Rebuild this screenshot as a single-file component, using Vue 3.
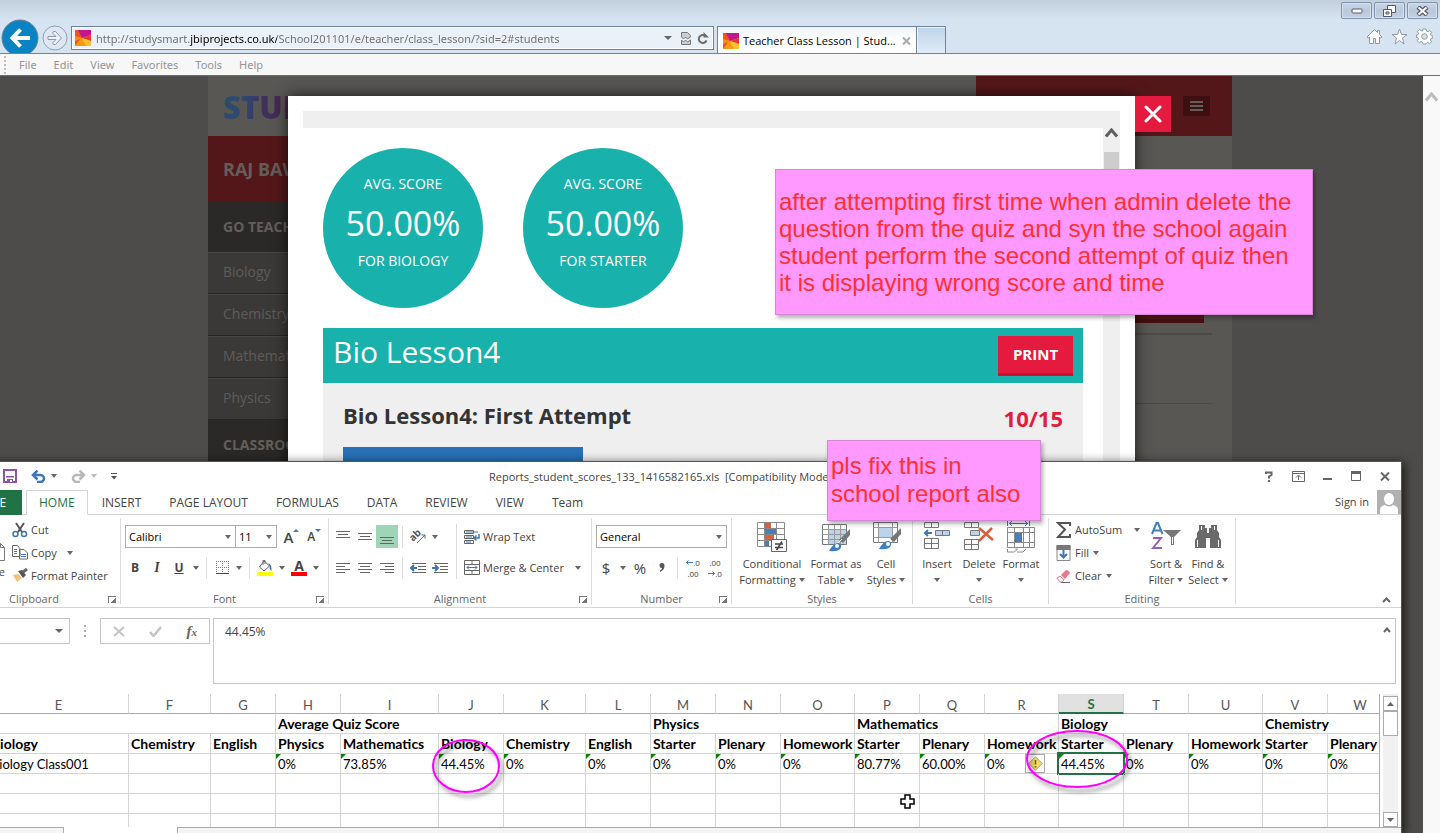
<script setup>
import { ref } from 'vue'

const url = ref('http://studysmart.jbiprojects.co.uk/School201101/e/teacher/class_lesson/?sid=2#students')
const formula = ref('44.45%')
const cellRef = ref('')
const fontName = ref('Calibri')
const fontSize = ref('11')
const numberFormat = ref('General')

const menus = ['File', 'Edit', 'View', 'Favorites', 'Tools', 'Help']
const subjects = ['Biology', 'Chemistry', 'Mathematics', 'Physics']
const scores = [
  { value: '50.00%', label: 'FOR BIOLOGY' },
  { value: '50.00%', label: 'FOR STARTER' }
]
const tabs = ['HOME', 'INSERT', 'PAGE LAYOUT', 'FORMULAS', 'DATA', 'REVIEW', 'VIEW', 'Team']

const columns = [
  ['E', 140], ['F', 82], ['G', 65], ['H', 65], ['I', 98], ['J', 65], ['K', 82], ['L', 65],
  ['M', 65], ['N', 65], ['O', 74], ['P', 65], ['Q', 65], ['R', 74], ['S', 65], ['T', 65],
  ['U', 74], ['V', 65], ['W', 65]
]
const groups = [
  ['', 3], ['Average Quiz Score', 5], ['Physics', 3], ['Mathematics', 3], ['Biology', 3], ['Chemistry', 2]
]
const heads = [
  'Biology', 'Chemistry', 'English', 'Physics', 'Mathematics', 'Biology', 'Chemistry', 'English',
  'Starter', 'Plenary', 'Homework', 'Starter', 'Plenary', 'Homework', 'Starter', 'Plenary',
  'Homework', 'Starter', 'Plenary'
]
const values = [
  'Biology Class001', '', '', '0%', '73.85%', '44.45%', '0%', '0%', '0%', '0%', '0%',
  '80.77%', '60.00%', '0%', '44.45%', '0%', '0%', '0%', '0%'
]
</script>

<template>
  <div class="desktop">
    <section class="browser">
      <header class="chrome">
        <div class="win-buttons">
          <button aria-label="Minimize"><svg width="12" height="6"><rect x="1" y="1" width="10" height="4" rx="1" fill="#fff" stroke="#555a6b" /></svg></button>
          <button aria-label="Restore"><svg width="13" height="12"><path d="M4.500.5h8v7h-8z" fill="#fff" stroke="#555a6b" /><path d="M.5 4.500h8v7h-8z" fill="#fff" stroke="#555a6b" /><path d="M3 7h3v2h-3z" fill="#c5d1e0" stroke="#555a6b" /></svg></button>
          <button aria-label="Close"><svg width="13" height="10"><path d="M2 1l9 8M11 1l-9 8" stroke="#555a6b" stroke-width="4.500" /><path d="M2.500 1.500l8 7M10.500 1.500l-8 7" stroke="#fff" stroke-width="2" /></svg></button>
        </div>
        <div class="nav">
          <button class="back" aria-label="Back">
            <svg width="38" height="38" viewBox="0 0 38 38"><circle cx="19" cy="19" r="18" fill="#0a83c4" stroke="#6f8299" /><path d="M29 19H12M19.500 10.500l-8 8.500 8 8.500" fill="none" stroke="#fff" stroke-width="4" /></svg>
          </button>
          <button class="forward" aria-label="Forward">
            <svg width="26" height="26" viewBox="0 0 26 26"><circle cx="13" cy="13" r="12" fill="#dfe8f2" stroke="#8fa0b3" /><path d="M6 11.500h8L10.500 8l1-1.500h2l6 6.500-6 6.500h-2l-1-1.500 3.500-3.500H6z" fill="#eef3f9" stroke="#8997a8" /></svg>
          </button>
          <div class="address">
            <svg class="favicon" width="16" height="16" viewBox="0 0 16 16"><path d="M0 0h16v16H0z" fill="#f8b418" /><path d="M0 0h5l3 8-8 8z" fill="#f4511e" /><path d="M3 0h13v5L7 8z" fill="#c2188c" /><path d="M0 6l8 2-8 3z" fill="#ff8a1c" /><path d="M7 8l9-3v6z" fill="#e53935" /><path d="M7 8l9 3v5h-4z" fill="#fbc02d" /><path d="M6 8l5 8H0z" fill="#f59a16" /></svg>
            <input v-model="url" aria-label="Address" spellcheck="false" />
            <span class="caret"></span>
            <button aria-label="Compatibility view"><svg width="10" height="13" viewBox="0 0 10 13"><path d="M.5 5V.5h6l3 3V5l-3 2-2-2-2 2zM.5 8l2 2 2-2 2 2 3-2v4.500h-9z" fill="#c9cdd2" stroke="#777" /></svg></button>
            <button aria-label="Refresh"><svg width="12" height="13" viewBox="0 0 12 13"><path d="M8.500 4A4 4 0 1 0 9.500 8.500" fill="none" stroke="#6d6d6d" stroke-width="2" /><path d="M6.500 0v5.500H12z" fill="#6d6d6d" /></svg></button>
          </div>
          <div class="tab">
            <svg class="favicon" width="16" height="16" viewBox="0 0 16 16"><path d="M0 0h16v16H0z" fill="#f8b418" /><path d="M0 0h5l3 8-8 8z" fill="#f4511e" /><path d="M3 0h13v5L7 8z" fill="#c2188c" /><path d="M0 6l8 2-8 3z" fill="#ff8a1c" /><path d="M7 8l9-3v6z" fill="#e53935" /><path d="M7 8l9 3v5h-4z" fill="#fbc02d" /><path d="M6 8l5 8H0z" fill="#f59a16" /></svg>
            <span>Teacher Class Lesson | Stud...</span>
            <button aria-label="Close tab"><svg width="9" height="8"><path d="M1 .5l7 7M8 .5l-7 7" stroke="#aaa" stroke-width="2" /></svg></button>
          </div>
          <button class="new-tab" aria-label="New tab"></button>
          <div class="tools">
            <button aria-label="Home"><svg width="17" height="17" viewBox="0 0 17 17"><path d="M8.500 1.500L1 9l1.500 1L3.500 9v6.500h4v-5h2v5h4V9l1 1L16 9l-2.500-2.500v-4h-2v2z" fill="#fff" stroke="#9199a3" /></svg></button>
            <button aria-label="Favorites"><svg width="17" height="17" viewBox="0 0 17 17"><path d="M8.500 1l2 5.500H16l-4.500 3.500 1.500 6-4.500-3.500L4 16l1.500-6L1 6.500h5.500z" fill="#fff" stroke="#9199a3" /></svg></button>
            <button aria-label="Settings"><svg width="17" height="17" viewBox="0 0 17 17"><path d="M7 1h3l.4 2 1.600.700 1.700-1.200 2 2-1.200 1.700.6 1.500L17 8v2l-2 .5-.6 1.500 1.200 1.700-2 2-1.700-1.200-1.600.7L10 16H7l-.4-1.800-1.600-.7-1.700 1.200-2-2L2.500 11 2 9.700l-1.500-.2V7L2 6.700l.6-1.500-1.200-1.700 2-2 1.700 1.200L6.600 3z" fill="#fff" stroke="#9199a3" /><circle cx="8.500" cy="8.500" r="2.800" fill="#d6e4f1" stroke="#9199a3" /></svg></button>
          </div>
        </div>
      </header>
      <nav class="menubar">
        <span class="grip"></span>
        <button v-for="m in menus" :key="m">{{ m }}</button>
      </nav>

      <main class="page">
        <div class="site">
          <header class="site-head">
            <span class="logo">STUDYSMART</span>
            <div class="site-red">
              <button aria-label="Menu"><i></i><i></i><i></i></button>
            </div>
          </header>
          <div class="site-body">
            <aside>
              <div class="user">RAJ BAWA</div>
              <h4>GO TEACHING</h4>
              <a v-for="s in subjects" :key="s" href="#">{{ s }}</a>
              <h4>CLASSROOM</h4>
            </aside>
            <div class="site-main">
              <div class="red-bar"></div>
              <hr class="thick" />
              <hr />
            </div>
          </div>
        </div>

        <div class="modal">
          <button class="close" aria-label="Close"><svg width="18" height="18"><path d="M2 2l14 14M16 2L2 16" stroke="#fff" stroke-width="3" stroke-linecap="round" /></svg></button>
          <div class="frame">
            <div class="frame-content">
              <div class="scores">
                <div v-for="s in scores" :key="s.label" class="score">
                  <span>AVG. SCORE</span>
                  <strong>{{ s.value }}</strong>
                  <span>{{ s.label }}</span>
                </div>
              </div>
              <div class="lesson-head">
                <h2>Bio Lesson4</h2>
                <button>PRINT</button>
              </div>
              <div class="lesson-body">
                <div class="attempt">
                  <h3>Bio Lesson4: First Attempt</h3>
                  <b>10/15</b>
                </div>
                <div class="blue"></div>
              </div>
            </div>
            <div class="frame-scroll">
              <svg width="13" height="10" viewBox="0 0 13 10"><path d="M1 8.500L6.500 2 12 8.500" fill="none" stroke="#606060" stroke-width="3" /></svg>
              <div class="thumb"></div>
            </div>
          </div>
        </div>
        <div class="page-scroll">
          <svg width="13" height="10" viewBox="0 0 13 10"><path d="M1 8.500L6.500 2 12 8.500" fill="none" stroke="#bcbcbc" stroke-width="3" /></svg>
        </div>
      </main>
    </section>

    <section class="excel">
      <header class="xl-title">
        <div class="qat">
          <button aria-label="Save"><svg width="14" height="14"><path d="M1 1h12v12H1z" fill="#fff" stroke="#8a55a8" stroke-width="2" /><path d="M3 7h8v1.500H3zM4 10h6v4H4z" fill="#8a55a8" /><path d="M7 11h2v2H7z" fill="#fff" /></svg></button>
          <button class="undo" aria-label="Undo"><svg width="15" height="13"><path d="M2 5h7a4 3.500 0 0 1 0 7H6M6.500.5L2 5l4.500 4.500" fill="none" stroke="#3f76b5" stroke-width="2.500" /></svg></button>
          <span class="caret"></span>
          <button class="redo" aria-label="Redo"><svg width="15" height="13"><path d="M13 5H6a4 3.500 0 0 0 0 7h3M8.500.5L13 5 8.500 9.500" fill="none" stroke="#b8b8b8" stroke-width="2.500" /></svg></button>
          <span class="caret pale"></span>
          <button class="more" aria-label="Customize"><svg width="6" height="7"><path d="M0 .5h6" stroke="#555" /><path d="M0 3h6L3 6.500z" fill="#555" /></svg></button>
        </div>
        <h1>Reports_student_scores_133_1416582165.xls&nbsp; [Compatibility Mode]</h1>
        <div class="xl-win">
          <button aria-label="Help"><svg width="9" height="11"><path d="M1 3V1.500h5.500V4L4 5.500V7.500M4 9v2" fill="none" stroke="#666" stroke-width="2" /></svg></button>
          <button aria-label="Ribbon display options"><svg width="13" height="11"><path d="M.5.5h12v10H.5zM.5 2.500h12M6.500 9V5M4 6.500L6.500 4 9 6.500" fill="none" stroke="#666" /></svg></button>
          <button aria-label="Minimize"><svg width="9" height="11"><path d="M0 8h9" stroke="#666" stroke-width="2" /></svg></button>
          <button aria-label="Maximize"><svg width="10" height="10"><path d="M.5.5h9v9h-9z" fill="none" stroke="#666" /><path d="M0 0h10v3H0z" fill="#666" /></svg></button>
          <button aria-label="Close"><svg width="10" height="9"><path d="M1 .5l8 8M9 .5l-8 8" stroke="#666" stroke-width="2" /></svg></button>
        </div>
      </header>

      <nav class="xl-tabs">
        <button class="file">FILE</button>
        <button v-for="(t, i) in tabs" :key="t" :class="{ on: i === 0 }">{{ t }}</button>
        <a href="#">Sign in</a>
        <svg class="avatar" width="24" height="24"><path d="M0 0h24v24H0z" fill="#b1b1b1" /><ellipse cx="12" cy="9" rx="5" ry="6" fill="#fff" /><path d="M3 24v-4q0-4 5-5 4 3 8 0 5 1 5 5v4z" fill="#fff" /></svg>
      </nav>

      <div class="ribbon">
        <div class="group clip">
          <div class="body">
            <button class="paste"><svg width="12" height="18"><path d="M.5.5h7l4 4v13H.5zM7.500.5v4h4" fill="#fff" stroke="#777" /></svg><span>Paste</span></button>
            <div class="stack3">
              <button><svg width="16" height="16"><path d="M4 1l6 9M12 1L6 10" stroke="#555" stroke-width="2" /><circle cx="3.500" cy="12" r="2.500" fill="none" stroke="#3f76b5" stroke-width="1.500" /><circle cx="12" cy="12" r="2.500" fill="none" stroke="#3f76b5" stroke-width="1.500" /></svg>Cut</button>
              <button><svg width="16" height="15"><path d="M.5.5h5l2.500 3v8H.5zM7.500 4.500H12l3.500 3.500v6h-8z" fill="#fff" stroke="#666" /><path d="M2 4.500h3M2 6.500h3M2 8.500h3M9 9.500h5M9 11.500h5" stroke="#3f76b5" /></svg>Copy<span class="caret"></span></button>
              <button><svg width="16" height="15"><path d="M1 7l5-1 4 4-5 4z" fill="#f0c27b" /><path d="M6 3l4-1 4 5-3 3z" fill="#555" /><path d="M11 4l4-3" stroke="#666" stroke-width="3" /></svg>Format Painter</button>
            </div>
          </div>
          <footer>Clipboard<i class="launch"></i></footer>
        </div>

        <div class="group font">
          <div class="body rows2">
            <div class="row">
              <label class="sel w-font"><select v-model="fontName" aria-label="Font"><option>Calibri</option></select><span class="caret"></span></label>
              <label class="sel w-size"><select v-model="fontSize" aria-label="Font size"><option>11</option></select><span class="caret"></span></label>
              <button class="b22 big-a" aria-label="Increase font size">A<svg width="6" height="3"><path d="M0 3h6L3 0z" fill="#3f76b5" /></svg></button>
              <button class="b22 small-a" aria-label="Decrease font size">A<svg width="6" height="3"><path d="M0 0h6L3 3z" fill="#3f76b5" /></svg></button>
            </div>
            <div class="row">
              <button class="b22"><b>B</b></button>
              <button class="b22"><em>I</em></button>
              <button class="b22"><u>U</u></button>
              <span class="caret c12"></span>
              <i class="sep"></i>
              <button class="b22" aria-label="Borders"><svg width="13" height="13"><path d="M.5 0v12M12.500 0v12M6.500 0v12M0 .5h13M0 6.500h13" stroke="#777" stroke-dasharray="1 1" /><path d="M0 12.500h13" stroke="#444" /></svg></button>
              <span class="caret c12"></span>
              <i class="sep"></i>
              <button class="b22" aria-label="Fill color"><svg width="16" height="16"><path d="M7 1l5.500 5L7 11 2.500 7zM6 5V.5h2V4" fill="#fff" stroke="#666" /><path d="M11 3q4 1 3.500 8-2-1-2-5z" fill="#3f76b5" /><path d="M0 12h16v4H0z" fill="#ff0" /></svg></button>
              <span class="caret c12"></span>
              <button class="b22 fc" aria-label="Font color"><b>A</b></button>
              <span class="caret c12"></span>
            </div>
          </div>
          <footer>Font<i class="launch"></i></footer>
        </div>

        <div class="group align">
          <div class="body">
            <div class="rows2 flat">
              <div class="row">
                <button class="b22" aria-label="Top align"><svg width="14" height="14"><path d="M0 1.500h14M2 4.500h10M0 7.500h14" stroke="#666" /></svg></button>
                <button class="b22" aria-label="Middle align"><svg width="14" height="14"><path d="M0 3.500h14M2 6.500h10M0 9.500h14" stroke="#666" /></svg></button>
                <button class="b22 active" aria-label="Bottom align"><svg width="14" height="16"><path d="M0 8.500h14M2 11.500h10M0 14.500h14" stroke="#666" /></svg></button>
                <i class="sep"></i>
                <button class="b22" aria-label="Orientation"><svg class="orient" width="16" height="15"><text x="0" y="10" transform="rotate(-45 5 8)" font-size="10" font-family="Open Sans, sans-serif" font-weight="bold" fill="#555">ab</text><path d="M7 14l8-8M11.500 6H15v3.500" fill="none" stroke="#666" /></svg></button>
                <span class="caret c12"></span>
              </div>
              <div class="row">
                <button class="b22" aria-label="Align left"><svg width="14" height="12"><path d="M0 1.500h14M0 4.500h9M0 7.500h14M0 10.500h9" stroke="#666" /></svg></button>
                <button class="b22" aria-label="Center"><svg width="14" height="12"><path d="M0 1.500h14M2 4.500h10M0 7.500h14M2 10.500h10" stroke="#666" /></svg></button>
                <button class="b22" aria-label="Align right"><svg width="14" height="12"><path d="M0 1.500h14M5 4.500h9M0 7.500h14M5 10.500h9" stroke="#666" /></svg></button>
                <i class="sep"></i>
                <button class="b22" aria-label="Decrease indent"><svg width="16" height="12"><path d="M2 1.500h14M8 4.500h8M8 7.500h8M2 10.500h14" stroke="#666" /><path d="M1 6h6M4 3L1 6l3 3" fill="none" stroke="#3f76b5" stroke-width="2" /></svg></button>
                <button class="b22" aria-label="Increase indent"><svg width="16" height="12"><path d="M2 1.500h14M8 4.500h8M8 7.500h8M2 10.500h14" stroke="#666" /><path d="M0 6h6M3 3l3 3-3 3" fill="none" stroke="#3f76b5" stroke-width="2" /></svg></button>
              </div>
            </div>
            <i class="sep tall"></i>
            <div class="rows2 flat wide">
              <button class="lbl"><svg width="16" height="16"><path d="M.5 1.500h9v3h-9zM.5 6.500h9v3h-9zM.5 11.500h9v3h-9z" fill="none" stroke="#666" /><path d="M2 3h12M2 8h6M2 13h5" stroke="#3f76b5" /><path d="M15 5v4h-4M12.500 6.500L10 9l2.500 2.500" fill="none" stroke="#3f76b5" stroke-width="1.500" /></svg>Wrap Text</button>
              <button class="lbl"><svg width="16" height="15"><path d="M.5.5h15v14H.5zM.5 4.500h15M.5 10.500h15M8 .5v4M8 10.500v4" fill="none" stroke="#666" /><path d="M3 7.500h10M5 5.500l-2 2 2 2M11 5.500l2 2-2 2" fill="none" stroke="#3f76b5" /></svg>Merge &amp; Center<span class="caret"></span></button>
            </div>
          </div>
          <footer>Alignment<i class="launch"></i></footer>
        </div>

        <div class="group number">
          <div class="body rows2">
            <div class="row">
              <label class="sel w-num"><select v-model="numberFormat" aria-label="Number format"><option>General</option></select><span class="caret"></span></label>
            </div>
            <div class="row">
              <button class="b22 sym">$</button>
              <span class="caret c12"></span>
              <button class="b22 sym">%</button>
              <button class="b22 sym" aria-label="Comma style"><svg width="6" height="9"><path d="M3 0a2.500 2.500 0 0 1 2.500 2.500Q5.500 7 1 9V7.500q2-1 2-2.500A2.500 2.500 0 0 1 3 0z" fill="#555" /></svg></button>
              <i class="sep"></i>
              <button class="b22 dec"><span><svg width="7" height="5"><path d="M0 2.500h7M2.500.5l-2 2 2 2" stroke="#3f76b5" fill="none" /></svg>.0</span><span>.00</span></button>
              <button class="b22 dec"><span>.00</span><span><svg width="7" height="5"><path d="M0 2.500h7M4.500.5l2 2-2 2" stroke="#3f76b5" fill="none" /></svg>.0</span></button>
            </div>
          </div>
          <footer>Number<i class="launch"></i></footer>
        </div>

        <div class="group styles">
          <div class="body bigs">
            <button class="big w74"><svg width="32" height="32"><path d="M1.500 1.500h27v24h-27zM1.500 7.500h27M1.500 13.500h27M1.500 19.500h27M8.500 1.500v24M20.500 1.500v24" fill="#fff" stroke="#8a8a8a" /><path d="M9 2h6v5H9zM9 14h9v5H9z" fill="#d9603a" /><path d="M9 8h11v5H9zM9 20h4v5H9z" fill="#4a7ebb" /><path d="M15.500 18.500h15v12h-15z" fill="#fff" stroke="#666" /><path d="M19 23h8M19 26.500h8M26 20.500L20.500 29" stroke="#444" stroke-width="1.500" /></svg><span>Conditional<br />Formatting<i class="caret"></i></span></button>
            <button class="big w54"><svg width="32" height="32"><path d="M2.500 3.500h24v20h-24z" fill="#fff" stroke="#777" /><path d="M8 8h18v15H8z" fill="#bdd3e9" /><path d="M2.500 8.500h24M2.500 13.500h24M2.500 18.500h24M8.500 3.500v20M14.500 3.500v20M20.500 3.500v20" stroke="#999" /><path d="M30 8v6l-7 8-4-3z" fill="#777" /><path d="M22 18l-6 6" stroke="#fff" stroke-width="1" /><path d="M9 30q5-9 10-8 4 2 1 6-3 3-11 2z" fill="#3f7fbd" /><circle cx="17" cy="25" r="2" fill="#fff" /></svg><span>Format as<br />Table<i class="caret"></i></span></button>
            <button class="big w46"><svg width="32" height="32"><path d="M3.500 1.500h24v20h-24z" fill="#fff" stroke="#777" /><path d="M3.500 6.500h24M3.500 16.500h24M8.500 1.500v20M22.500 1.500v20" stroke="#999" /><path d="M9 7h13v9H9z" fill="#bdd3e9" /><path d="M31 7v6l-7 8-4-3z" fill="#777" /><path d="M9 28q5-9 10-8 4 2 1 6-3 3-11 2z" fill="#3f7fbd" /><circle cx="18" cy="23" r="2" fill="#fff" /></svg><span>Cell<br />Styles<i class="caret"></i></span></button>
          </div>
          <footer>Styles</footer>
        </div>

        <div class="group cells">
          <div class="body bigs">
            <button class="big w42"><svg width="28" height="32"><path d="M1.500 1.500h14v5h-14zM8.500 1.500v5M1.500 17.500h14v10h-14zM8.500 17.500v10M1.500 22.500h14" fill="none" stroke="#777" /><path d="M12.500 9.500h14v5h-14zM19.500 9.500v5" fill="#bdd3e9" stroke="#777" /><path d="M2 12h7M5 9l-3 3 3 3" fill="none" stroke="#3f76b5" stroke-width="2" /></svg><span>Insert<br /><i class="caret"></i></span></button>
            <button class="big w42"><svg width="32" height="32"><path d="M1.500 1.500h14v5h-14zM8.500 1.500v5M1.500 18.500h14v10h-14zM8.500 18.500v10M1.500 23.500h14" fill="none" stroke="#777" /><path d="M7.500 9.500h9v5h-9z" fill="#bdd3e9" stroke="#777" /><path d="M16 7l14 12M29 7L16 20" stroke="#d9603a" stroke-width="2.500" /></svg><span>Delete<br /><i class="caret"></i></span></button>
            <button class="big w42"><svg width="30" height="32"><path d="M1.500 6.500h27v20h-27zM1.500 11.500h27M1.500 21.500h27M8.500 6.500v20M17.500 6.500v20M23.500 6.500v20" fill="#fff" stroke="#888" /><path d="M9 12h7v9H9z" fill="#4a7ebb" /><path d="M1.500 0v5M23.500 0v5M3 2.500h19M6 0L3.500 2.500 6 5M19 0l2.500 2.500L19 5" fill="none" stroke="#3f76b5" /><path d="M1.500 28v3h7l3-3h-2M11 31h6l3-3" fill="none" stroke="#888" /></svg><span>Format<br /><i class="caret"></i></span></button>
          </div>
          <footer>Cells</footer>
        </div>

        <div class="group editing">
          <div class="body">
            <div class="stack3">
              <button><svg width="16" height="16"><path d="M14 4V1H2l7 6.500L2 15h12v-3" fill="none" stroke="#555" stroke-width="2" /></svg>AutoSum<span class="caret far"></span></button>
              <button><svg width="15" height="16"><path d="M1 .5h13v15H1z" fill="#fff" stroke="#888" /><path d="M.5 0h14v5H.5z" fill="#777" /><path d="M7.500 5v7M4 9l3.500 3.500L11 9" fill="none" stroke="#3f76b5" stroke-width="2" /></svg>Fill<span class="caret"></span></button>
              <button><svg width="15" height="14"><path d="M5 6l5-5q3 0 4 3l-5 6z" fill="#e8788e" /><path d="M1 9l3-2 4 4-2 2H4z" fill="#fff" stroke="#e8788e" /><path d="M5 13.500h9" stroke="#666" /></svg>Clear<span class="caret"></span></button>
            </div>
            <div class="bigs flat">
              <button class="big w42"><svg width="30" height="32"><path d="M1 13L5.500 2h1.500L11.500 13M3 9.500h6.500" fill="none" stroke="#3f7fbd" stroke-width="2" /><path d="M2 17h8L2 27h9" fill="none" stroke="#9560b5" stroke-width="2" /><path d="M12 9h18l-7 7v8h-3v-8z" fill="#777" /><path d="M21.500 16v7" stroke="#fff" /></svg><span>Sort &amp;<br />Filter<i class="caret"></i></span></button>
              <button class="big w42"><svg width="28" height="32"><path d="M5 4h6v3h2v5h2V7h2V4h6v5l2 3v4l2 3v8H16V17h-4v10H1v-8l2-3v-4l2-3z" fill="#6a6a6a" /><path d="M3.500 19v7M24.500 19v7M7.500 5v4M20.500 5v4" stroke="#fff" /></svg><span>Find &amp;<br />Select<i class="caret"></i></span></button>
            </div>
          </div>
          <footer>Editing</footer>
        </div>
        <button class="collapse" aria-label="Collapse the ribbon"><svg width="9" height="6"><path d="M1 5l3.500-3.500L8 5" fill="none" stroke="#666" stroke-width="2" /></svg></button>
      </div>

      <div class="formula-bar">
        <div class="name-box"><input v-model="cellRef" aria-label="Name box" /><span class="caret"></span></div>
        <span class="dots"><i></i><i></i><i></i></span>
        <div class="fx">
          <button aria-label="Cancel"><svg width="12" height="11"><path d="M1 1l10 9M11 1L1 10" stroke="#c4c4c4" stroke-width="2" /></svg></button>
          <button aria-label="Enter"><svg width="13" height="11"><path d="M1 6l3.500 4L12 1" fill="none" stroke="#c4c4c4" stroke-width="2.500" /></svg></button>
          <button class="fn"><em>f<small>x</small></em></button>
        </div>
        <div class="formula">
          <textarea v-model="formula" aria-label="Formula" spellcheck="false"></textarea>
          <svg width="8" height="6"><path d="M1 5l3-3.500L7 5" fill="none" stroke="#666" stroke-width="2" /></svg>
        </div>
      </div>

      <div class="sheet">
        <div class="grid">
          <table>
            <colgroup><col v-for="c in columns" :key="c[0]" :style="{ width: c[1] + 'px' }" /></colgroup>
            <thead>
              <tr><th v-for="c in columns" :key="c[0]" :class="{ cur: c[0] === 'S' }">{{ c[0] }}</th></tr>
            </thead>
            <tbody>
              <tr class="bold"><td v-for="g in groups" :key="g[0]" :colspan="g[1]">{{ g[0] }}</td></tr>
              <tr class="bold"><td v-for="(h, i) in heads" :key="i">{{ h }}</td></tr>
              <tr>
                <td v-for="(v, i) in values" :key="i" :class="{ flag: i > 2, picked: i === 14 }">{{ v }}<span v-if="i === 13" class="warn"><svg width="15" height="15"><path d="M7.500.8l6.700 6.700-6.700 6.700L.8 7.500z" fill="#f7dc5a" stroke="#999" /><path d="M7.500 4v4.500M7.500 10v1.500" stroke="#555" stroke-width="1.500" /></svg></span></td>
              </tr>
              <tr v-for="n in 3" :key="n"><td v-for="c in columns" :key="c[0]"></td></tr>
            </tbody>
          </table>
        </div>
        <div class="xl-scroll">
          <button aria-label="Scroll up"><svg width="7" height="4"><path d="M0 4h7L3.500 0z" fill="#666" /></svg></button>
          <div class="xl-thumb"></div>
          <button class="down" aria-label="Scroll down"><svg width="7" height="4"><path d="M0 0h7L3.500 4z" fill="#666" /></svg></button>
        </div>
      </div>
      <div class="sheet-tabs"><i class="l"></i><i class="m"></i><i class="r"></i></div>
    </section>

    <svg class="ring ring-j" width="78" height="64"><ellipse cx="35" cy="28" rx="33" ry="26" fill="none" stroke="#ff00ff" stroke-width="2" /></svg>
    <svg class="ring ring-s" width="114" height="68"><ellipse cx="52" cy="30" rx="50" ry="28" fill="none" stroke="#ff00ff" stroke-width="2" /></svg>
    <svg class="cursor" width="16" height="16"><path d="M5 1h5v4h4v5h-4v4H5v-4H1V5h4z" fill="#fff" stroke="#000" stroke-width="1.500" /></svg>

    <p class="note note-a">after attempting first time when admin delete the<br />question from the quiz and syn the school again<br />student perform the second attempt of quiz then<br />it is displaying wrong score and time</p>
    <p class="note note-b">pls fix this in<br />school report also</p>
  </div>
</template>

<style>
html, body { margin: 0; height: 100%; overflow: hidden; }
</style>

<style scoped>
* { box-sizing: border-box; }
button { border: 0; background: none; padding: 0; margin: 0; font: inherit; color: inherit; display: flex; align-items: center; justify-content: center; white-space: nowrap; }
input, textarea, select { font: inherit; border: 0; background: none; padding: 0; margin: 0; outline: 0; color: inherit; resize: none; appearance: none; min-width: 0; border-radius: 0; }
h1, h2, h3, h4, p { margin: 0; font-weight: normal; }
b { font-weight: bold; }
svg { flex: none; display: block; }
.desktop { position: relative; height: 100vh; overflow: hidden; font: 11px/16px "Open Sans", "Noto Sans", sans-serif; color: #444; }
.caret { flex: none; display: inline-block; width: 0; height: 0; border: 3px solid transparent; border-top: 4px solid #666; border-bottom: 0; }
.caret.pale { border-top-color: #bbb; }

.browser { display: flex; flex-direction: column; height: 100%; }
.chrome { height: 54px; flex: none; background: linear-gradient(#c2cfdd, #d6e4f1 20px); border-bottom: 1px solid #6f8299; display: flex; flex-direction: column; }
.win-buttons { display: flex; justify-content: flex-end; gap: 2px; padding: 2px 2px 0; height: 19px; }
.win-buttons button { width: 31px; height: 17px; border: 1px solid #8192ae; border-radius: 2px; background: linear-gradient(#c9d6e5, #b9c8da 50%, #c3d0e0); box-shadow: inset 0 0 0 1px #d5e0ec; }
.nav { flex: 1; display: flex; align-items: flex-start; overflow: hidden; }
.back { margin-left: 1px; width: 38px; height: 38px; }
.forward { margin: 6px 3px 0; width: 26px; }
.address { flex: 0 1 643px; margin-top: 7px; height: 24px; border: 1px solid #6f8299; background: #ebf1f9; display: flex; align-items: center; padding: 0 4px 0 3px; color: #6d6d6d; box-shadow: inset 0 0 0 1px #fff; }
.address input { flex: 1; height: 18px; margin-left: 5px; font-family: "Noto Sans", sans-serif; background: linear-gradient(90deg, #6d6d6d 94px, #000 94px 181px, #6d6d6d 181px); -webkit-background-clip: text; background-clip: text; color: transparent; }
.address .caret { border-width: 4px 4px 0; }
.address button { margin-left: 6px; }
.address .caret + button { margin-left: 9px; }
.tab { flex: 0 1 200px; margin: 7px 0 0 3px; height: 28px; border: 1px solid #6f8299; border-bottom: 0; background: linear-gradient(#eef4fa, #fff 12px); display: flex; align-items: center; padding: 0 5px; color: #000; }
.tab span { flex: 1; margin-left: 4px; white-space: nowrap; }
.new-tab { margin-top: 7px; width: 29px; height: 28px; border: 1px solid #6f8299; border-width: 1px 1px 0 0; background: linear-gradient(#bdd3ea, #e2ecf7); box-shadow: inset 1px 1px 0 #eef4fa; }
.tools { margin: 9px 7px 0 auto; display: flex; gap: 8px; }
.menubar { height: 22px; flex: none; background: #f7f7f7; border-bottom: 1px solid #6e6d6b; display: flex; align-items: center; gap: 17px; color: #959595; font-family: "Noto Sans", sans-serif; }
.grip { width: 2px; height: 18px; margin: 0 -4px 0 4px; background: repeating-linear-gradient(#bbb 0 2px, transparent 2px 4px); }

.page { position: relative; flex: 1; overflow: hidden; background: #4d4c4a; font-size: 14px; }
.site { width: 1024px; max-width: 100%; margin: 0 auto; min-height: 100%; background: #585754; color: #5b5957; display: flex; flex-direction: column; }
.site-head { height: 60px; display: flex; justify-content: space-between; }
.logo { padding: 9px 15px; font-size: 31px; line-height: 44px; font-weight: 800; background: linear-gradient(90deg, #2b4d68 15px, #2f4a70 34px, #3a3260 54px, #55204c 84px); -webkit-background-clip: text; background-clip: text; color: transparent; }
.site-red { width: 256px; background: #541719; display: flex; justify-content: flex-end; align-items: flex-start; padding: 20px 22px; }
.site-red button { width: 27px; height: 20px; background: #3f0e11; flex-direction: column; gap: 2px; }
.site-red i { width: 13px; height: 2px; background: #635e5b; }
.site-body { flex: 1; display: flex; }
aside { width: 256px; background: #2a2927; }
.user { height: 66px; background: #541719; padding: 0 15px; line-height: 66px; font-size: 18px; font-weight: bold; color: #635e5b; }
aside h4 { height: 50px; line-height: 50px; padding: 0 15px; font-size: 14px; font-weight: bold; color: #635e5b; }
aside a { display: block; height: 42px; line-height: 38px; padding: 0 15px; background: #3a3937; border-bottom: 1px solid #262523; border-top: 1px solid #484745; color: #5e5c5a; text-decoration: none; }
.site-main { flex: 1; padding: 0 20px 0 0; }
.red-bar { margin: 140px 8px 10px 0; height: 47px; background: #541719; border-bottom: 4px solid #470f14; }
hr { border: 0; height: 1px; background: #4c4b49; margin: 0 0 69px; }
hr.thick { height: 2px; margin-bottom: 68px; }
.page-scroll { position: absolute; top: 0; right: 0; bottom: 0; width: 17px; background: #f9f9f9; padding: 16px 2px; }

.modal { position: absolute; top: 20px; bottom: 0; left: 288px; right: 305px; background: #fff; padding: 15px 15px 0; box-shadow: 0 0 14px rgba(0, 0, 0, .7); }
.close { position: absolute; left: 100%; top: 0; width: 36px; height: 36px; background: #e41b3e; }
.frame { height: 100%; border-top: 17px solid #efefef; display: flex; }
.frame-content { flex: 1; padding: 20px 20px 0; }
.frame-scroll { width: 17px; background: #efefef; display: flex; flex-direction: column; align-items: center; }
.thumb { width: 15px; height: 100px; margin-top: 14px; background: #cdcdcd; }
.scores { display: flex; gap: 40px; }
.score { width: 160px; height: 160px; border-radius: 50%; background: #19b1ac; color: #fff; display: flex; flex-direction: column; align-items: center; padding-top: 26px; line-height: 20px; }
.score strong { font-size: 34px; line-height: 46px; font-weight: normal; margin: 6px 0 5px; }
.lesson-head { margin-top: 20px; height: 55px; background: #19b1ac; display: flex; align-items: center; justify-content: space-between; padding: 0 10px; }
.lesson-head h2 { font-size: 30px; line-height: 40px; color: #fff; padding-bottom: 8px; }
.lesson-head button { width: 75px; height: 40px; background: #e41b3e; border-bottom: 3px solid #c31432; color: #fff; font-weight: bold; font-size: 15px; }
.lesson-body { background: #efefef; padding: 15px 20px 0; height: 200px; }
.attempt { display: flex; justify-content: space-between; height: 49px; font-weight: bold; font-size: 22px; line-height: 34px; }
.attempt h3 { font: inherit; color: #333; }
.attempt b { color: #e41b3e; padding-top: 3px; }
.blue { width: 240px; height: 80px; background: #2871b6; }

.excel { position: absolute; left: -33px; right: 38px; top: 461px; bottom: 0; background: #fff; border: 1px solid #217346; border-width: 1px 1px 0 0; box-shadow: 2px 2px 10px rgba(0, 0, 0, .7); display: flex; flex-direction: column; padding-left: 1px; }
.xl-title { height: 28px; flex: none; display: flex; align-items: center; }
.qat { display: flex; align-items: center; padding-left: 35px; width: 521px; }
.undo { margin: 0 5px 0 14px; }
.redo { margin: 0 5px 0 14px; }
.more { margin-left: 14px; }
.xl-title h1 { flex: 1; font-size: 11px; white-space: nowrap; padding-top: 2px; }
.xl-win { display: flex; gap: 5px; padding-right: 4px; }
.xl-win button { width: 24px; height: 16px; }
.xl-tabs { height: 25px; flex: none; display: flex; align-items: center; border-bottom: 1px solid #d4d4d4; }
.xl-tabs button { height: 25px; padding: 0 14px; align-self: flex-start; font-size: 12px; }
.xl-tabs .file { width: 54px; background: #217346; color: #fff; margin-right: 4px; }
.xl-tabs .on { color: #217346; border: 1px solid #d4d4d4; border-bottom-color: #fff; padding: 0 12px; }
.xl-tabs a { margin-left: auto; margin-right: 8px; color: #444; text-decoration: none; }

.ribbon { height: 93px; flex: none; display: flex; border-bottom: 1px solid #d4d4d4; padding-top: 3px; position: relative; }
.group { flex: none; display: flex; flex-direction: column; height: 86px; border-right: 1px solid #dcdcdc; }
.clip { width: 153px; }
.font { width: 208px; }
.align { width: 263px; }
.number { width: 140px; }
.styles { width: 181px; }
.cells { width: 136px; }
.editing { width: 187px; }
.body { flex: 1; display: flex; }
.group footer { height: 16px; line-height: 16px; text-align: center; color: #666; position: relative; margin-bottom: -3px; }
.clip footer { margin-left: -20px; }
.launch { position: absolute; right: 4px; bottom: 4px; width: 8px; height: 7px; border: 1px solid #777; border-width: 1px 0 0 1px; background: linear-gradient(135deg, transparent 55%, #777 55%); }
.rows2 { flex-direction: column; gap: 8px; padding: 7px 3px 0; }
.rows2.flat { display: flex; padding: 7px 0 0 3px; }
.row { display: flex; align-items: center; height: 23px; }
.stack3 { display: flex; flex-direction: column; }
.stack3 button { height: 23px; justify-content: flex-start; gap: 3px; }
.stack3 .caret { margin-left: 7px; }
.editing .stack3 .caret { margin-left: 1px; }
.editing .stack3 .caret.far { margin-left: 9px; }
.stack3 svg { width: 16px; }
.paste { width: 37px; height: 62px; margin-right: 7px; flex-direction: column; align-items: flex-end; justify-content: flex-end; gap: 3px; }
.b22 { width: 22px; height: 23px; font-size: 12px; }
.b22 em { font-family: "Liberation Serif", serif; font-weight: bold; font-size: 14px; }
.b22 u { font-weight: bold; }
.big-a, .small-a { align-items: center; font-weight: 600; margin-left: 1px; }
.big-a { font-size: 15px; margin-left: 3px; }
.big-a svg, .small-a svg { align-self: flex-start; margin-top: 4px; }
.c12 { margin: 0 3px; }
.sep { flex: none; width: 1px; height: 22px; background: #dcdcdc; margin: 0 4px; }
.sep.tall { height: 55px; margin: 6px 7px 0 0; }
.fc b { border-bottom: 4px solid #f00; width: 16px; line-height: 13px; font-size: 14px; text-align: center; }
.active { background: #9fd5b7; }
.orient { overflow: visible; }
.align .body > .rows2:first-child { width: 127px; }
.rows2.wide { padding-left: 0; }
.lbl { height: 23px; gap: 3px; justify-content: flex-start; }
.lbl .caret { margin-left: 8px; }
.sel { position: relative; height: 23px; border: 1px solid #ababab; display: block; color: #000; }
.sel select { width: 100%; height: 21px; padding-left: 3px; display: block; }
.sel .caret { position: absolute; right: 4px; top: 9px; }
.w-font { width: 112px; margin-left: 1px; }
.w-size { width: 43px; margin-left: -1px; }
.w-num { width: 131px; margin-left: 1px; }
.sym { font-size: 15px; }
.dec { flex-direction: column; font-size: 8px; line-height: 11px; }
.dec span { display: flex; align-items: center; height: 11px; }
.bigs { padding: 3px 3px 0; }
.bigs.flat { display: flex; padding: 3px 0 0; }
.big { flex-direction: column; justify-content: flex-start; height: 70px; line-height: 16px; text-align: center; }
.big svg { margin-bottom: 3px; }
.big .caret { margin: 0 0 2px 3px; }
.cells .big .caret { margin-left: 0; }
.w74 { width: 74px; }
.w54 { width: 54px; }
.w46 { width: 46px; }
.w42 { width: 42px; }
.editing .stack3 { width: 96px; padding-left: 7px; }
.collapse { position: absolute; right: 10px; bottom: 4px; }

.formula-bar { flex: none; display: flex; align-items: flex-start; padding: 10px 5px 10px 0; }
.name-box { width: 102px; height: 26px; border: 1px solid #c6c6c6; display: flex; align-items: center; padding-right: 6px; }
.name-box input { flex: 1; width: 20px; }
.name-box .caret { border-width: 4px 4px 0; }
.dots { width: 30px; height: 26px; display: flex; flex-direction: column; align-items: center; justify-content: center; gap: 3px; }
.dots i { width: 2px; height: 2px; background: #aaa; }
.fx { width: 110px; height: 26px; border: 1px solid #c6c6c6; display: flex; align-items: center; justify-content: space-around; margin-right: 3px; }
.fn { font: bold 15px "Liberation Serif", serif; color: #666; }
.fn small { font-size: 11px; }
.formula { flex: 1; height: 66px; border: 1px solid #c6c6c6; display: flex; padding: 4px 4px 0 11px; font-size: 12px; line-height: 18px; }
.formula textarea { flex: 1; height: 54px; overflow: hidden; }
.formula svg { margin-top: 4px; }

.sheet { flex: 1; min-height: 0; display: flex; padding-right: 3px; }
.grid { flex: 1; overflow: hidden; margin: 0 3px 0 21px; border-right: 1px solid #ababab; }
table { table-layout: fixed; width: 1339px; border-collapse: separate; border-spacing: 0; font: 13px/16px Lato, "Open Sans", sans-serif; color: #000; }
th { height: 20px; padding: 2px 0 0; font-weight: normal; color: #555; border-right: 1px solid #d4d4d4; border-bottom: 1px solid #ababab; }
th.cur { background: #e1e1e1; color: #217346; font-weight: bold; border-bottom: 2px solid #217346; }
td { position: relative; height: 20px; padding: 0 0 0 2px; border-right: 1px solid #d4d4d4; border-bottom: 1px solid #d4d4d4; white-space: nowrap; }
.bold td { font-weight: bold; font-size: 14px; }
.flag::before { content: ""; position: absolute; left: 0; top: 0; border: 5px solid transparent; border-width: 5px 5px 0 0; border-top-color: #0a800a; }
.picked::after { content: ""; position: absolute; left: -2px; top: -2px; right: -2px; bottom: -2px; border: 2px solid #217346; }
.warn { position: absolute; right: 13px; top: 0; width: 20px; height: 19px; border: 1px solid #ababab; background: #fff; display: flex; align-items: center; justify-content: center; }
.xl-scroll { width: 15px; background: #f1f1f1; display: flex; flex-direction: column; padding-top: 2px; }
.xl-scroll button { height: 15px; border: 1px solid #ababab; background: #fff; }
.xl-scroll .down { margin-top: auto; }
.xl-thumb { height: 25px; border: 1px solid #ababab; background: #fff; }
.sheet-tabs { height: 6px; flex: none; display: flex; }
.sheet-tabs i { border-top: 1px solid #ababab; background: #f4f4f4; }
.sheet-tabs .l { width: 96px; border-right: 1px solid #ababab; }
.sheet-tabs .m { width: 113px; background: #fff; border-top-color: #fff; }
.sheet-tabs .r { flex: 1; border-left: 1px solid #ababab; }

.ring { position: absolute; filter: drop-shadow(3px 4px 2px rgba(0, 0, 0, .5)); }
.ring-j { left: 431px; top: 738px; }
.ring-s { left: 1025px; top: 729px; }
.cursor { position: absolute; left: 900px; top: 794px; }
.note { position: absolute; background: #ff99ff; border: 1px solid #d488d4; box-shadow: 2px 3px 4px rgba(0, 0, 0, .3); color: #ff3030; font: 24px/27px "Liberation Sans", Arial, sans-serif; padding: 0 3px; white-space: nowrap; }
.note-a { left: 775px; top: 169px; width: 538px; padding-top: 18px; height: 146px; }
.note-b { left: 827px; top: 440px; width: 214px; padding-top: 11px; height: 81px; line-height: 28px; }
</style>
